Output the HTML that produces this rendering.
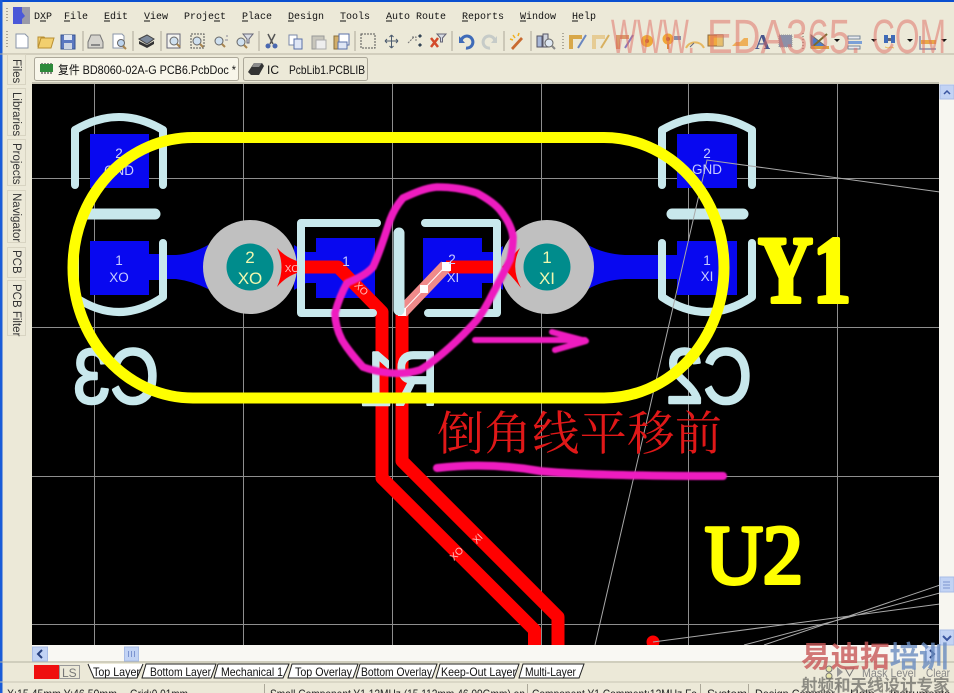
<!DOCTYPE html>
<html><head><meta charset="utf-8"><title>PCB</title>
<style>
html,body{margin:0;padding:0;background:#ece9d8;overflow:hidden}
svg{display:block}
text{font-family:"Liberation Sans","Noto Sans CJK SC",sans-serif}
.m{font-family:"Liberation Mono",monospace;font-size:10px;fill:#111}
.u{fill:#111;font-size:12px}
.tab{fill:#fff;stroke:#222;stroke-width:1}
.g{fill:none;stroke:#8e8e8e;stroke-width:1}
.s{fill:none;stroke:#c8e8ec;stroke-width:8;stroke-linecap:round;stroke-linejoin:round}
.pl{fill:#c8ccff;font-size:13.500px;text-anchor:middle}
.sil{fill:#c8e8ec;stroke:#c8e8ec;stroke-width:2.500;stroke-linejoin:round}
.v{fill:#f0f8b0;font-size:17px;text-anchor:middle}
.r{fill:none;stroke:#f00;stroke-width:13;stroke-linejoin:round}
.pk{fill:none;stroke:#ee1cc0;stroke-linecap:round;stroke-linejoin:round}
</style></head><body>
<svg width="954" height="693" viewBox="0 0 954 693" xmlns="http://www.w3.org/2000/svg">
<defs><clipPath id="c"><rect x="32" y="84" width="907" height="561"/></clipPath>
<filter id="b" x="-5%" y="-5%" width="110%" height="110%"><feGaussianBlur stdDeviation="0.8"/></filter>
<filter id="b2" x="-5%" y="-50%" width="110%" height="200%"><feGaussianBlur stdDeviation="0.8"/></filter></defs>
<rect width="954" height="693" fill="#ece9d8"/>
<rect width="954" height="2" fill="#0a4fd0"/>
<rect width="2.500" height="693" fill="#1a5cd8"/>

<!-- menu -->
<path d="M7 8v14M7 31v18" stroke="#a9a595" stroke-width="2" stroke-dasharray="1 2"/>
<rect x="13" y="7" width="17" height="17" fill="#4a58d8"/><path d="M22 7h8v17h-8v-5l3-3-3-4z" fill="#9a9aa8"/>
<g class="m">
<text class="m" x="34" y="19">DXP</text><text class="m" x="64" y="19">File</text><text class="m" x="104" y="19">Edit</text><text class="m" x="144" y="19">View</text><text class="m" x="184" y="19">Project</text><text class="m" x="242" y="19">Place</text><text class="m" x="288" y="19">Design</text><text class="m" x="340" y="19">Tools</text><text class="m" x="386" y="19">Auto Route</text><text class="m" x="462" y="19">Reports</text><text class="m" x="520" y="19">Window</text><text class="m" x="572" y="19">Help</text>
</g>
<path d="M40 21h6M64 21h6M104 21h6M144 21h6M214 21h6M242 21h6M288 21h6M340 21h6M386 21h6M462 21h6M520 21h6M572 21h6" stroke="#111"/>

<!-- toolbar separators -->
<path d="M83 31v20M133 31v20M161 31v20M259 31v20M355 31v20M452 31v20M504 31v20M531 31v20" stroke="#aca899"/>
<path d="M563 33v16M803 33v16" stroke="#aca899" stroke-width="2" stroke-dasharray="1 2"/>
<path d="M0 54h954" stroke="#b8b4a2"/>

<!-- toolbar icons -->
<path d="M16 34h9l3 3v11H16z" fill="#fff" stroke="#8a95a8"/>
<path d="M38 48l3-10h13l-3 10zM38 47V37h6l1 1h5" fill="#f2cf6e" stroke="#b98f32"/>
<rect x="61" y="35" width="14" height="14" fill="#5b78c0" stroke="#39558f"/><rect x="64" y="35" width="8" height="5" fill="#dfe6f2"/><rect x="64" y="43" width="8" height="6" fill="#cfd6e2"/>
<path d="M88 42l3-7h9l3 7v6H88z" fill="#d5d3cd" stroke="#777"/><rect x="91" y="44" width="9" height="2" fill="#888"/>
<path d="M113 34h9l2 2v12h-11z" fill="#fff" stroke="#8a95a8"/><circle cx="121" cy="43" r="3.500" fill="#bcd4ee" stroke="#666"/><path d="M123 46l3 3" stroke="#a98650" stroke-width="2"/>
<path d="M139 39l8-4 7 4-7 5z" fill="#7d8a9c" stroke="#444"/><path d="M139 41v3l8 4 7-4v-3l-7 4z" fill="#333"/>
<rect x="167" y="34" width="13" height="14" fill="#f4f4f0" stroke="#667"/><circle cx="174" cy="41" r="4" fill="#cfe0ef" stroke="#666"/><path d="M177 44l3 3" stroke="#a98650" stroke-width="2"/>
<rect x="191" y="34" width="13" height="14" fill="none" stroke="#555" stroke-dasharray="2 1"/><circle cx="197" cy="41" r="4" fill="#cfe0ef" stroke="#666"/><path d="M200 44l3 3" stroke="#a98650" stroke-width="2"/>
<circle cx="219" cy="41" r="4" fill="#cfe0ef" stroke="#666"/><path d="M222 44l3 3" stroke="#a98650" stroke-width="2"/><path d="M226 36h2M225 40h3" stroke="#889"/>
<circle cx="241" cy="42" r="4" fill="#cfe0ef" stroke="#666"/><path d="M244 45l3 3" stroke="#a98650" stroke-width="2"/><path d="M243 34h10l-4 5v4h-2v-4z" fill="#d8dce4" stroke="#667"/>
<path d="M268 34l5 10M275 34l-5 10" stroke="#555" stroke-width="1.500"/><circle cx="268" cy="46" r="2.500" fill="#4a68b0"/><circle cx="275" cy="46" r="2.500" fill="#4a68b0"/>
<rect x="289" y="35" width="8" height="10" fill="#fff" stroke="#7a88a8"/><rect x="294" y="39" width="8" height="10" fill="#dfe6f5" stroke="#5a70a8"/>
<rect x="312" y="36" width="12" height="13" fill="#c8c6bc" stroke="#999"/><rect x="316" y="40" width="10" height="9" fill="#eee" stroke="#aaa"/>
<rect x="334" y="36" width="12" height="13" fill="#d2ae6a" stroke="#8a6f3a"/><rect x="339" y="34" width="10" height="11" fill="#fff" stroke="#5a70a8"/><rect x="338" y="42" width="9" height="7" fill="#dfe6f5" stroke="#5a70a8"/>
<rect x="361" y="34" width="14" height="14" fill="none" stroke="#555" stroke-dasharray="2 1"/>
<path d="M385 41h13M391.500 35v13M385 41l2-2M385 41l2 2M398 41l-2-2M398 41l-2 2M391.500 35l-2 2M391.500 35l2 2M391.500 48l-2-2M391.500 48l2-2" stroke="#4b5a6e" fill="none"/>
<path d="M408 43l6-6M412 37h4v5" stroke="#777" fill="none" stroke-dasharray="2 1"/><path d="M419 35l2 2M419 44l2 2" stroke="#345" stroke-width="3"/>
<path d="M431 38l7 9M438 38l-7 9" stroke="#d34a2a" stroke-width="2.500"/><path d="M437 34h9l-3.500 4v4h-2v-4z" fill="#d8dce4" stroke="#667"/>
<path d="M461 41a6 6 0 1 1 5 7" fill="none" stroke="#3f6bb8" stroke-width="3"/><path d="M459 36v7h6z" fill="#3f6bb8"/>
<path d="M495 41a6 6 0 1 0-5 7" fill="none" stroke="#c6cbc8" stroke-width="3"/><path d="M497 36v7h-6z" fill="#c6cbc8"/>
<path d="M511 48l10-11 2 2-10 11z" fill="#c86a30"/><path d="M513 35l2 3M510 39l3 1M519 33l-1 3" stroke="#f0b020" stroke-width="1.500"/>
<rect x="537" y="36" width="5" height="11" fill="#a8b8d8" stroke="#556"/><rect x="543" y="34" width="5" height="13" fill="#d0d4dc" stroke="#556"/><circle cx="549" cy="43" r="4" fill="#dfe8f2" stroke="#666"/><path d="M552 46l3 3" stroke="#888" stroke-width="2"/>
<path d="M571 49V37h11" fill="none" stroke="#d8a84a" stroke-width="4"/><path d="M578 48l8-13" stroke="#6a86c0" stroke-width="2"/>
<path d="M594 49V37h11" fill="none" stroke="#e6cc94" stroke-width="4"/><path d="M601 48l8-13" stroke="#d8b060" stroke-width="2"/>
<path d="M618 49V37h11" fill="none" stroke="#d89a6a" stroke-width="4"/><path d="M625 48l8-13" stroke="#8a78b8" stroke-width="2"/>
<circle cx="647" cy="41" r="6" fill="#eeaa38"/><circle cx="647" cy="41" r="2" fill="#d06a30"/>
<circle cx="668" cy="39" r="5.500" fill="#f0a838"/><circle cx="668" cy="39" r="2" fill="#c86a30"/><path d="M668 44v5" stroke="#d89030" stroke-width="2"/><rect x="674" y="36" width="7" height="4" fill="#8a8ea8"/>
<path d="M686 48a10 10 0 0 1 18 0" fill="none" stroke="#e6b860" stroke-width="2"/><path d="M690 47l4-4" stroke="#667"/>
<rect x="708" y="35" width="15" height="11" fill="#f0a840" stroke="#8a6a40"/><rect x="717" y="35" width="6" height="11" fill="#e2c880" opacity=".7"/>
<path d="M732 46l4-4h4l4-4h4v8z" fill="#eeb058"/>
<text x="755" y="49" font-size="21" font-weight="bold" fill="#49568c" style="font-family:'Liberation Serif',serif">A</text>
<rect x="779" y="35" width="13" height="12" fill="#8c90a8" stroke="#999" stroke-dasharray="1 1"/>
<path d="M811 35v13h17z" fill="#4d7cc8" stroke="#6a6a6a"/><path d="M811 48l16-14" stroke="#7a6a30" stroke-width="2"/><rect x="811" y="46" width="18" height="3" fill="#dca040"/>
<path d="M834 39h6l-3 3z" fill="#111"/>
<rect x="848" y="36" width="12" height="3" fill="#e8eaee" stroke="#789"/><rect x="848" y="41" width="14" height="3" fill="#7aa0d8"/><rect x="848" y="46" width="12" height="3" fill="#e8eaee" stroke="#789"/>
<path d="M871 39h6l-3 3z" fill="#111"/>
<path d="M884 35h4v8h-4zM891 35h4v8h-4z" fill="#3f6bb8"/><path d="M888 38h3v3h-3z" fill="#667"/><path d="M885 47l3 1 3-1 3 1" stroke="#e8c060" fill="none"/>
<path d="M907 39h6l-3 3z" fill="#111"/>
<path d="M920 36v13h16" fill="none" stroke="#8a8ea8" stroke-width="1.500"/><rect x="921" y="40" width="15" height="4" fill="#e8a848"/>
<path d="M941 39h6l-3 3z" fill="#111"/>

<!-- document tabs -->
<rect x="34.500" y="57.500" width="204" height="23" rx="2" fill="#f8f6ea" stroke="#aca899"/>
<rect x="243.500" y="57.500" width="124" height="23" rx="2" fill="#ece9d8" stroke="#aca899"/>
<rect x="40" y="64" width="13" height="8" fill="#2d8a3a"/><path d="M42 72v2M45 72v2M48 72v2M51 72v2M42 64v-1M45 64v-1M48 64v-1M51 64v-1" stroke="#222"/>
<text x="58" y="74" font-size="12" fill="#111" textLength="178" lengthAdjust="spacingAndGlyphs">复件 BD8060-02A-G PCB6.PcbDoc *</text>
<path d="M248 72l6-9h8l2 3-5 9h-8z" fill="#333"/><path d="M254 63h8l-3 4h-7z" fill="#8a8a8a"/>
<text x="267" y="74" font-size="12" fill="#111">IC</text><text x="289" y="74" font-size="12" fill="#111" textLength="76" lengthAdjust="spacingAndGlyphs">PcbLib1.PCBLIB</text>
<path d="M32 83h907" stroke="#9a9788"/>

<!-- left panels -->
<g fill="#ece9d8" stroke="#d8d4c2"><rect x="7.500" y="54.500" width="18" height="30"/><rect x="7.500" y="88.500" width="18" height="47"/><rect x="7.500" y="139.500" width="18" height="46"/><rect x="7.500" y="190.500" width="18" height="52"/><rect x="7.500" y="247.500" width="18" height="30"/><rect x="7.500" y="280.500" width="18" height="55"/></g>
<g font-size="11.500" fill="#333">
<text transform="translate(13,59) rotate(90)">Files</text>
<text transform="translate(13,92) rotate(90)">Libraries</text>
<text transform="translate(13,143) rotate(90)">Projects</text>
<text transform="translate(13,193) rotate(90)">Navigator</text>
<text transform="translate(13,250) rotate(90)">PCB</text>
<text transform="translate(13,284) rotate(90)">PCB Filter</text>
</g>

<!-- canvas -->
<rect x="32" y="84" width="907" height="561" fill="#000"/>
<g clip-path="url(#c)">
<path class="g" d="M94.500 84v561M243.500 84v561M392.500 84v561M541.500 84v561M688.500 84v561M837.500 84v561M32 178.500h907M32 327.500h907M32 476.500h907M32 624.500h907"/>

<!-- copper -->
<g fill="#0808f0">
<rect x="90" y="134" width="59" height="54"/><rect x="90" y="241" width="59" height="54"/>
<rect x="677" y="134" width="60" height="54"/><rect x="677" y="241" width="60" height="54"/>
<path d="M149 254h12v1h15q16-1 32-10v44q-16-8-32-10h-15v1h-12z"/>
<path d="M588 245q16 9 37 10h52v-1h4v26h-4v-1h-52q-21 1-37 10z"/>
<rect x="316" y="238" width="59" height="60"/><rect x="423" y="238" width="59" height="60"/>
<path d="M294 245l12 7h10v31h-10l-12 7z"/><path d="M482 252h11l10-6v44l-10-7h-11z"/>
</g>
<circle cx="250" cy="267" r="47" fill="#c0c0c0"/><circle cx="547" cy="267" r="47" fill="#c0c0c0"/>
<circle cx="250" cy="267" r="23.500" fill="#008c8c"/><circle cx="547" cy="267" r="23.500" fill="#008c8c"/>

<path class="r" d="M300 267H338L382 312V478L534.500 630V650"/>
<path class="r" d="M402 312V461L558 617V650"/>
<path class="r" d="M446 267H495"/>
<path d="M277 248q9 10 23 14v10q-14 4-23 15 9-20 0-39z" fill="#f00"/>
<path d="M520 248q-9 9-18 19 9 8 19 21-11-21-1-40z" fill="#f00"/>
<path d="M402 312L446 266" stroke="#f08a8a" stroke-width="13" fill="none"/>
<path d="M402 312L446 266" stroke="#fff" stroke-width="1" fill="none"/>
<g fill="#fff"><rect x="398" y="308" width="8" height="8"/><rect x="420" y="285" width="8" height="8"/><rect x="442" y="262" width="9" height="9"/></g>
<circle cx="653" cy="642" r="6.500" fill="#f00"/>

<!-- silk -->
<path class="s" d="M75 185V130Q119 104 163 130V185"/>
<path class="s" d="M163 243V297Q119 327 75 297V243"/>
<path class="s" d="M662 185V130Q707 104 752 130V185"/>
<path class="s" d="M752 243V297Q707 327 662 297V243"/>
<path class="s" style="stroke-width:11" d="M85 214H155M672 214H743"/>
<path class="s" d="M377 223H301V313H373M425 223H497V313H428"/>
<path class="s" style="stroke-width:11" d="M399 233V310"/>
<text class="sil" transform="translate(159,403) scale(-1,1)" font-size="78" textLength="86" lengthAdjust="spacingAndGlyphs">C3</text>
<text class="sil" transform="translate(752,403) scale(-1,1)" font-size="78" textLength="86" lengthAdjust="spacingAndGlyphs">C2</text>
<text class="sil" transform="translate(438,405) scale(-1,1)" font-size="76" textLength="78" lengthAdjust="spacingAndGlyphs">R1</text>

<!-- ratsnest -->
<path d="M595 645L707 160L940 192M653 642L940 604M764 645L940 585M744 645L940 593" fill="none" stroke="#a8a8a8" stroke-width="1"/>

<!-- labels -->
<text class="pl" x="119" y="158">2</text><text class="pl" x="119" y="175">GND</text>
<text class="pl" x="119" y="265">1</text><text class="pl" x="119" y="282">XO</text>
<text class="pl" x="707" y="158">2</text><text class="pl" x="707" y="174">GND</text>
<text class="pl" x="707" y="265">1</text><text class="pl" x="707" y="281">XI</text>
<text class="pl" x="346" y="266">1</text><text class="pl" x="452" y="264">2</text><text class="pl" x="453" y="282" style="font-size:13px">XI</text>
<text class="v" x="250" y="263">2</text><text class="v" x="250" y="284">XO</text>
<text class="v" x="547" y="263">1</text><text class="v" x="547" y="284">XI</text>
<g fill="#ffc0c0" font-size="10" text-anchor="middle">
<text x="292" y="272">XO</text>
<text transform="translate(359,291) rotate(45)">XO</text>
<text transform="translate(480,541) rotate(-45)">XI</text>
<text transform="translate(459,556) rotate(-45)">XO</text>
</g>

<!-- yellow -->
<rect x="73" y="137.500" width="651" height="260.500" rx="120" ry="130" fill="none" stroke="#ff0" stroke-width="11"/>
<text x="758" y="302" font-size="95" font-weight="bold" fill="#ff0" stroke="#ff0" stroke-width="4" stroke-linejoin="round" textLength="93" lengthAdjust="spacingAndGlyphs" style="font-family:'Liberation Serif',serif">Y1</text>
<text x="705" y="583" font-size="84" fill="#ff0" stroke="#ff0" stroke-width="4" stroke-linejoin="round" textLength="98" lengthAdjust="spacingAndGlyphs" style="font-family:'Liberation Serif',serif">U2</text>

<text x="437" y="450" font-size="47" fill="#e01818" style="font-family:'Liberation Serif','Noto Serif CJK SC',serif" textLength="285">倒角线平移前</text>

<!-- annotations -->
<g filter="url(#b)">
<path class="pk" stroke-width="7.500" d="M437 187C450 187 465 189 477 193C488 199 495 204 500 210C508 220 512 228 513 237C513 245 512 252 510 260C504 272 499 282 493 293C488 303 483 312 477 320C468 330 459 339 450 347C440 356 430 364 420 370C410 373 400 374 390 373C380 372 371 370 363 367C355 358 348 350 342 340C338 332 335 322 335 313C338 302 342 292 347 283C356 279 366 275 373 267C380 252 385 235 390 220C393 212 397 205 403 198C414 193 425 188 437 187Z"/>
</g>
<g filter="url(#b2)">
<path class="pk" stroke-width="6" d="M475 340H585M552 332L586 341L555 350"/>
<path class="pk" stroke-width="8" d="M437 468C470 464 505 465 540 471C580 475 650 476 723 476"/>
</g>
</g>

<!-- scrollbars -->
<rect x="939" y="84" width="15" height="561" fill="#f7f6f0"/>
<rect x="940" y="85" width="14" height="14" fill="#c2d3f4" stroke="#a8bce6"/><path d="M944 94l3-3 3 3" fill="none" stroke="#3a55a0" stroke-width="1.500"/>
<rect x="940" y="577" width="14" height="15" fill="#c2d3f4" stroke="#a8bce6"/><path d="M943 582h7M943 585h7M943 588h7" stroke="#7c94d0"/>
<rect x="940" y="630" width="14" height="15" fill="#c2d3f4" stroke="#a8bce6"/><path d="M943 636l4 4 4-4" fill="none" stroke="#3a55a0" stroke-width="2"/>
<rect x="32" y="645" width="907" height="16" fill="#f9f8f3"/>
<rect x="32.500" y="647" width="15" height="14" fill="#c2d3f4" stroke="#a8bce6"/><path d="M42 650l-4 4 4 4" fill="none" stroke="#27407f" stroke-width="2"/>
<rect x="124.500" y="647" width="14" height="14" fill="#c2d3f4" stroke="#a8bce6"/><path d="M128.500 651v6M131.500 651v6M134.500 651v6" stroke="#7c94d0"/>
<rect x="925.500" y="647" width="14" height="14" fill="#c2d3f4" stroke="#a8bce6"/><path d="M930 650l4 4-4 4" fill="none" stroke="#27407f" stroke-width="2"/>
<path d="M0 662h954" stroke="#b5b2a2"/>

<!-- layer tabs -->
<rect x="34" y="665" width="25" height="14" fill="#ef0f0f"/>
<rect x="59.500" y="665.500" width="20" height="13" fill="#ece9d8" stroke="#999"/>
<text x="62" y="677" font-size="12" fill="#777">LS</text>
<path class="tab" d="M88 664l6 14h43l6-14"/>
<path class="tab" d="M146 664l-4 14h69l5-14z"/>
<path class="tab" d="M218 664l-4 14h69l6-14z"/>
<path class="tab" d="M292 664l-4 14h65l5-14z"/>
<path class="tab" d="M360 664l-4 14h76l5-14z"/>
<path class="tab" d="M440 664l-4 14h78l5-14z"/>
<path class="tab" d="M523 664l-4 14h60l5-14z"/>
<g class="u">
<text class="u" x="93" y="676" textLength="47" lengthAdjust="spacingAndGlyphs">Top Layer</text>
<text class="u" x="150" y="676" textLength="61" lengthAdjust="spacingAndGlyphs">Bottom Layer</text>
<text class="u" x="221" y="676" textLength="62" lengthAdjust="spacingAndGlyphs">Mechanical 1</text>
<text class="u" x="295" y="676" textLength="57" lengthAdjust="spacingAndGlyphs">Top Overlay</text>
<text class="u" x="361" y="676" textLength="71" lengthAdjust="spacingAndGlyphs">Bottom Overlay</text>
<text class="u" x="441" y="676" textLength="75" lengthAdjust="spacingAndGlyphs">Keep-Out Layer</text>
<text class="u" x="525" y="676" textLength="51" lengthAdjust="spacingAndGlyphs">Multi-Layer</text>
</g>
<path d="M0 682h954" stroke="#c8c5b3"/>
<path d="M264.500 684v9M527.500 684v9M700.500 684v9M748.500 684v9M838.500 684v9M882.500 684v9" stroke="#aca899"/>
<g font-size="12" fill="#222">
<text x="7" y="698" textLength="110" lengthAdjust="spacingAndGlyphs">X:15.45mm Y:46.50mm</text><text x="130" y="698" textLength="58" lengthAdjust="spacingAndGlyphs">Grid:0.01mm</text>
<text x="270" y="698" textLength="255" lengthAdjust="spacingAndGlyphs">Small Component Y1 12MHz (15.112mm,46.09Gmm) on</text>
<text x="532" y="698" textLength="165" lengthAdjust="spacingAndGlyphs">Component Y1 Comment:12MHz Fo</text>
<text x="707" y="698">System</text><text x="755" y="698" textLength="80" lengthAdjust="spacingAndGlyphs">Design Compiler</text><text x="850" y="698">Help</text><text x="890" y="698" textLength="60" lengthAdjust="spacingAndGlyphs">Instruments</text>
</g>

<!-- bottom right controls -->
<circle cx="829" cy="669" r="3" fill="#e8e6a8" stroke="#777"/><circle cx="829" cy="676" r="3" fill="#e8e6a8" stroke="#777"/>
<path d="M837 667l6 5-6 5z" fill="#999"/><path d="M845 668h9l-4.500 8z" fill="none" stroke="#777"/>
<text x="862" y="677" font-size="12" fill="#888" textLength="54" lengthAdjust="spacingAndGlyphs">Mask Level</text><text x="926" y="677" font-size="12" fill="#888" textLength="24" lengthAdjust="spacingAndGlyphs">Clear</text>

<!-- watermarks -->
<g fill="#e06a62" opacity=".5" font-size="48">
<text x="611" y="53" textLength="84" lengthAdjust="spacingAndGlyphs">WWW.</text>
<text x="707" y="53" textLength="154" lengthAdjust="spacingAndGlyphs">EDA365.</text>
<text x="872" y="53" textLength="74" lengthAdjust="spacingAndGlyphs">COM</text>
</g>
<text x="801" y="667" font-size="29.500" font-weight="bold" fill="#c85858" opacity=".8" style="font-family:'Noto Sans CJK SC',sans-serif">易迪拓<tspan fill="#6a8cc0">培训</tspan></text>
<text x="801" y="691" font-size="16.500" font-weight="bold" fill="#6e6e68" opacity=".75" style="font-family:'Noto Sans CJK SC',sans-serif">射频和天线设计专家</text>
</svg>
</body></html>
